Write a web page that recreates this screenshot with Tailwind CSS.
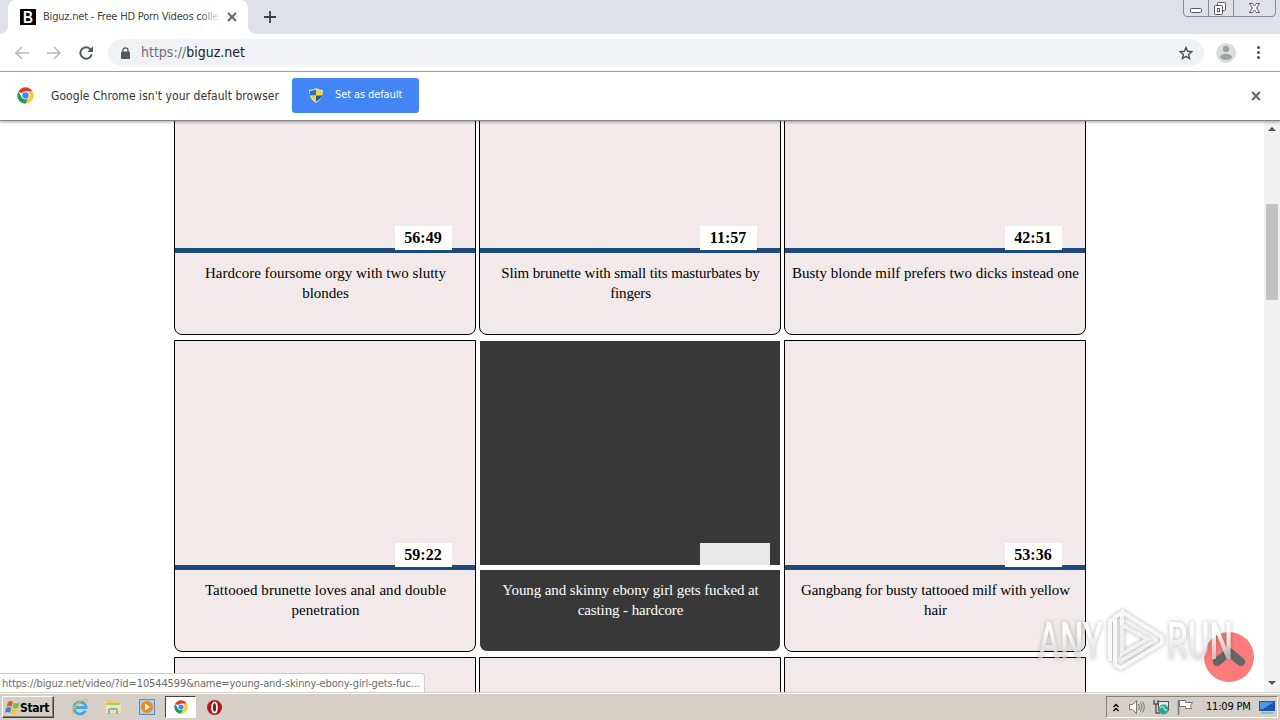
<!DOCTYPE html>
<html lang="en">
<head>
    <meta charset="UTF-8">
    <meta name="viewport" content="width=device-width, initial-scale=1.0">
    <title>Biguz.net</title>
    <script src="https://cdn.jsdelivr.net/npm/@tailwindcss/browser@4"></script>
</head>
<body class="w-[1280px] h-[720px] overflow-hidden flex flex-col bg-white font-['DejaVu_Sans_Condensed','DejaVu_Sans',sans-serif]">
    <!-- Shared icons -->
    <svg class="hidden">
        <symbol id="chrome" viewBox="0 0 48 48">
            <circle cx="24" cy="24" r="23" fill="#fff"/>
            <path d="M24 24 4.1 12.5A23 23 0 0 1 43.9 12.5H24z" fill="#de3b2f"/>
            <path d="M4.1 12.5A23 23 0 0 0 24 47L34 29.7 24 24 14 29.7z" fill="#1a9c58"/>
            <path d="M43.9 12.5A23 23 0 0 1 24 47L34 29.7 24 12.5z" fill="#fbcb3c"/>
            <circle cx="24" cy="24" r="11.5" fill="#fff"/>
            <circle cx="24" cy="24" r="9" fill="#4285f4"/>
        </symbol>
        <symbol id="cross" viewBox="0 0 10 10">
            <path d="M1 1 9 9M9 1 1 9" stroke="#5f6368" stroke-width="1.8" fill="none"/>
        </symbol>
    </svg>

    <!-- Tab strip -->
    <div class="relative h-[34px] shrink-0 bg-[#dee1e8] flex">
        <svg class="w-2 h-[34px] shrink-0" viewBox="0 0 8 34"><path d="M8 26A8 8 0 0 1 0 34H8z" fill="#fff"/></svg>
        <div class="w-[240px] h-[34px] bg-white rounded-t-lg flex items-center pl-3">
            <svg class="w-4 h-4 shrink-0" viewBox="0 0 16 16">
                <path d="M0 0h16v16H0z"/>
                <text x="8" y="14" text-anchor="middle" font-family="Liberation Sans" font-weight="bold" font-size="16.5" textLength="10" lengthAdjust="spacingAndGlyphs" fill="#fff">B</text>
            </svg>
            <div class="relative ml-[7px] w-[177px] overflow-hidden whitespace-nowrap text-[11px] tracking-[-0.2px] text-[#3c4043]">Biguz.net - Free HD Porn Videos colle
                <div class="absolute right-0 top-0 w-5 h-full bg-linear-to-r from-white/0 to-white"></div>
            </div>
            <svg class="ml-[7px] w-[10px] h-[10px]"><use href="#cross"/></svg>
        </div>
        <svg class="w-2 h-[34px] shrink-0" viewBox="0 0 8 34"><path d="M0 26A8 8 0 0 0 8 34H0z" fill="#fff"/></svg>
        <svg class="ml-2 mt-[11px] w-3 h-3" viewBox="0 0 12 12"><path d="M6 0v12M0 6h12" stroke="#3c4043" stroke-width="1.8"/></svg>
        <svg class="ml-auto mr-[4px] w-[93px] h-[17px]" viewBox="0 0 93 17" fill="none">
            <path d="M.5 0v13q0 3.500 3.500 3.500h85q3.500 0 3.500-3.500V0M25.500 0v16M50.500 0v16" stroke="#868b96"/>
            <rect x="7.500" y="8.500" width="11" height="4" rx="1" stroke="#555963" fill="#fff"/>
            <rect x="34.500" y="2.500" width="8" height="8" rx="1" stroke="#555963" fill="#fff"/>
            <rect x="31.500" y="5.500" width="8" height="9" rx="1" stroke="#555963" fill="#fff"/>
            <rect x="34.500" y="8.500" width="2" height="3" stroke="#555963"/>
            <path d="M66.500 3.500h3l2 2.500 2-2.500h3l-3 4.500 3 4.500h-3l-2-2.500-2 2.500h-3l3-4.500z" stroke="#555963" fill="#fff"/>
        </svg>
    </div>

    <!-- Toolbar -->
    <div class="h-[38px] shrink-0 flex items-center bg-white border-b border-[#a9abae] pl-[15px]">
        <svg class="w-[14px] h-[14px]" viewBox="0 0 14 14" fill="none" stroke="#b9bbbe" stroke-width="1.700"><path d="M14 7H1.500M7 1 1 7l6 6"/></svg>
        <svg class="ml-[18px] w-[14px] h-[14px]" viewBox="0 0 14 14" fill="none" stroke="#b9bbbe" stroke-width="1.700"><path d="M0 7h12.500M7 1l6 6-6 6"/></svg>
        <svg class="ml-[18px] w-[14px] h-[14px]" viewBox="0 0 14 14"><path d="M11.600 3.500A5.700 5.700 0 1 0 12.700 8.200" fill="none" stroke="#55595e" stroke-width="2"/><path d="M14 .3V6H8.300z" fill="#55595e"/></svg>
        <div class="ml-[15px] w-[1096px] h-[27px] rounded-full bg-[#f0f2f5] flex items-center pl-[13px] pr-[11px]">
            <svg class="w-[9px] h-[12px]" viewBox="0 0 9 12"><rect y="4.500" width="9" height="7.500" rx="1" fill="#55595e"/><path d="M2 5V3.300a2.500 2.500 0 0 1 5 0V5" fill="none" stroke="#55595e" stroke-width="1.300"/></svg>
            <div class="ml-[11px] text-[14px] text-[#6b6f74]">https://<span class="text-[#202124]">biguz.net</span></div>
            <svg class="ml-auto w-[14px] h-[14px]" viewBox="0 0 14 14"><path d="M7 1.500 8.600 5.300l4.200.4-3.200 2.700 1 4.100L7 10.300l-3.600 2.200 1-4.100L1.200 5.700l4.200-.4z" fill="none" stroke="#4d5156" stroke-width="1.400"/></svg>
        </div>
        <svg class="ml-3 w-5 h-5" viewBox="0 0 20 20"><circle cx="10" cy="10" r="10" fill="#dcdddf"/><circle cx="10" cy="6" r="3.200" fill="#9fa1a4"/><ellipse cx="10" cy="13.800" rx="6" ry="3" fill="#9fa1a4"/></svg>
        <svg class="ml-[21px] w-[3px] h-[13px]" viewBox="0 0 3 13" fill="#4d5156"><circle cx="1.500" cy="1.500" r="1.500"/><circle cx="1.500" cy="6.500" r="1.500"/><circle cx="1.500" cy="11.500" r="1.500"/></svg>
    </div>

    <!-- Default browser bar -->
    <div class="relative z-10 h-[49px] shrink-0 bg-white border-b border-[#858585] shadow-[0_1px_3px_rgba(0,0,0,0.35)] flex items-center pl-[17px] pr-[19px] pb-px">
        <svg class="w-[17px] h-[17px]"><use href="#chrome"/></svg>
        <div class="ml-[17px] w-[241px] whitespace-nowrap text-[12px] tracking-[0.06px] text-[#333]">Google Chrome isn't your default browser</div>
        <div class="w-[127px] h-[35px] rounded-[3px] bg-[#4285f4] flex items-center pl-[17px]">
            <svg class="w-[14px] h-[15px]" viewBox="0 0 14 15">
                <path d="M7 0Q10 2 14 2 14 11 7 15 0 11 0 2 4 2 7 0z" fill="#e0dfc8"/>
                <path d="M7 1.200V7.500H1Q.8 5 .9 2.900 4 3 7 1.200z" fill="#2a6fc4"/>
                <path d="M7 1.200V7.500h6Q13.200 5 13.100 2.900 10 3 7 1.200zM7 7.500v6.300Q2 11 1 7.500z" fill="#fcd233"/>
                <path d="M7 7.500h6Q12 11 7 13.800z" fill="#1e5cb3"/>
            </svg>
            <div class="ml-[12px] whitespace-nowrap text-[11px] tracking-[-0.1px] text-white">Set as default</div>
        </div>
        <svg class="ml-auto w-[10px] h-[10px]"><use href="#cross"/></svg>
    </div>

    <!-- Page -->
    <div class="relative h-[571px] shrink-0 flex overflow-hidden">
        <div class="w-[1264px] h-full overflow-hidden pl-[174px]">
            <div id="videos" class="-mt-[98px] w-[912px] grid grid-cols-3 gap-x-[3px] gap-y-[5px] font-['Liberation_Serif',serif] text-[15px] leading-[20px]"></div>
        </div>
        <!-- Scrollbar -->
        <div class="w-4 h-full bg-[#f1f1f1] flex flex-col items-center">
            <svg class="mt-[6px] w-[8px] h-[4px]" viewBox="0 0 8 4"><path d="M0 4 4 0l4 4z" fill="#505050"/></svg>
            <div class="mt-[73px] w-3 h-[96px] bg-[#c1c1c1]"></div>
            <svg class="mt-auto mb-[7px] w-[8px] h-[4px]" viewBox="0 0 8 4"><path d="M0 0h8L4 4z" fill="#505050"/></svg>
        </div>

        <!-- Scroll to top -->
        <svg class="absolute left-[1204px] top-[511px] w-[50px] h-[50px]" viewBox="0 0 50 50">
            <circle cx="25" cy="25" r="25" fill="#fb7c7b"/>
            <path d="M13 30 25 20l12 10" fill="none" stroke="#666" stroke-width="8.500" stroke-linecap="round"/>
        </svg>
        <!-- Watermark -->
        <svg class="absolute left-[1030px] top-[484px] w-[210px] h-[72px] drop-shadow-[0_0_2px_rgba(0,0,0,0.3)]" viewBox="0 0 210 72">
            <defs>
                <linearGradient id="fade" x1="0" y1="0" x2="0" y2="1"><stop offset=".35" stop-color="#fff" stop-opacity=".95"/><stop offset=".85" stop-color="#ddd" stop-opacity=".6"/></linearGradient>
            </defs>
            <g font-family="Roboto" font-size="51" font-weight="500" fill="url(#fade)">
                <text x="8" y="54" textLength="65" lengthAdjust="spacingAndGlyphs">ANY</text>
                <text x="137" y="54" textLength="66" lengthAdjust="spacingAndGlyphs">RUN</text>
            </g>
            <g fill="none" stroke-width="4">
                <path d="M80 56V16l4-2M85 58V12l7-5v14M92 7l40 25v6L91 63l-7-4" stroke="#f8f8f8"/>
                <path d="M92 20v29l26-15-26-14M92 55l30-18" stroke="#f0f0f0"/>
            </g>
        </svg>
        <!-- Link preview -->
        <div class="absolute left-0 bottom-0 w-[425px] h-[19px] bg-white border-t border-r border-[#cfcfcf] rounded-tr-[3px] pl-[2px] whitespace-nowrap text-[11px] leading-[19px] tracking-[-0.115px] text-[#6b6b6b]">https://biguz.net/video/?id=10544599&amp;name=young-and-skinny-ebony-girl-gets-fuc...</div>
    </div>

    <!-- Taskbar -->
    <div class="h-[28px] shrink-0 bg-[#d5cfc7] border-t border-[#d5cfc7] shadow-[inset_0_1px_0_#fff] flex items-center pt-px">
        <div class="ml-[2px] w-[52px] h-[22px] bg-[#d5cfc7] border border-t-white border-l-white border-b-[#404040] border-r-[#404040] shadow-[inset_-1px_-1px_0_#87837c] flex items-center pl-[2px]">
            <svg class="w-[15px] h-[15px]" viewBox="0 0 15 15">
                <path d="M3 2q2.500-2 5 0L6.500 7q-2.500-2-5 0z" fill="#e65c24"/>
                <path d="M9 2.500q2.500 2 5.500 0L13 7.500q-3 2-5.500 0z" fill="#7fba42"/>
                <path d="M1.200 8q2.500-2 5 0L5 13q-2.500-2-5 0z" fill="#3a82d0"/>
                <path d="M7.200 8.500q2.500 2 5.500 0l-1.500 5q-3 2-5.500 0z" fill="#f8c42d"/>
            </svg>
            <div class="mt-px text-[12px] font-bold text-black tracking-[-0.3px]">Start</div>
        </div>
        <svg class="ml-[17px] w-[18px] h-[18px]" viewBox="0 0 18 18" fill="none">
            <path d="M14.500 12.500A6 6 0 1 1 15 9.500H5" stroke="#41a9e4" stroke-width="2.800"/>
            <path d="M2 16C-1 14 5 5 12 2q5-2 4 2" stroke="#e8b93c" stroke-width="1.300"/>
        </svg>
        <svg class="ml-[16px] w-[17px] h-[16px]" viewBox="0 0 17 16">
            <path d="M1 1h6l1 2h7v11H1z" fill="#edcd68"/><path d="M2 4h13v2H2z" fill="#a9c878"/><path d="M1 6h15v8H1z" fill="#f8e59b"/><path d="M3 15v-4q0-2 2-2h6q2 0 2 2v4h-2v-4H5v4z" fill="#6fb9e6"/>
        </svg>
        <svg class="ml-[17px] w-[16px] h-[16px]" viewBox="0 0 16 16">
            <rect x=".5" y=".5" width="15" height="15" fill="#a9d0ec" stroke="#5590c0"/><circle cx="8" cy="8" r="6" fill="#f28a1b"/><path d="m6 4.500 5 3.500-5 3.500z" fill="#fff"/>
        </svg>
        <div class="ml-[10px] w-[31px] h-[22px] bg-white border border-t-[#404040] border-l-[#404040] border-b-white border-r-white flex items-center justify-center">
            <svg class="w-[14px] h-[14px]"><use href="#chrome"/></svg>
        </div>
        <svg class="ml-[11px] w-[15px] h-[15px]" viewBox="0 0 15 15"><circle cx="7.500" cy="7.500" r="7.500" fill="#b5141a"/><ellipse cx="7.500" cy="7.500" rx="2.400" ry="5.200" fill="#8a0d12" stroke="#fff" stroke-width="1.800"/></svg>

        <div class="ml-auto mr-[2px] w-[172px] h-[22px] border border-t-[#87837c] border-l-[#87837c] border-b-white border-r-white flex items-center">
            <svg class="ml-[6px] w-[6px] h-[9px]" viewBox="0 0 6 9" fill="none" stroke="#000" stroke-width="1.300"><path d="M.5 4 3 1.500 5.500 4M.5 8 3 5.500 5.500 8"/></svg>
            <svg class="ml-[10px] w-[16px] h-[14px]" viewBox="0 0 16 14" stroke="#777"><path d="M.5 4.500h3l4-4v13l-4-4h-3z" fill="#fff"/><path d="M9.500 4q2 3 0 6M11.500 2.500q3 4.500 0 9M13.500 1.500q3.500 5.500 0 11" fill="none"/></svg>
            <svg class="ml-[8px] w-[17px] h-[16px]" viewBox="0 0 17 16"><rect x="5.500" y="2.500" width="10" height="9" fill="#dcebf2" stroke="#555"/><path d="M1 1v4h4V1M3 5v9h4" fill="none" stroke="#555" stroke-width="1.400"/><circle cx="10.500" cy="10.500" r="5" fill="#30a39b"/><path d="M7 9q3-3 4 0t3 2" fill="none" stroke="#a8e4cc" stroke-width="1.400"/></svg>
            <svg class="ml-[7px] w-[16px] h-[16px]" viewBox="0 0 16 16" fill="#fff" stroke="#777"><path d="M1.500 1v15" stroke-width="1.500"/><path d="M2.500 1.500h6v2h7l-2 3 1 3H8.500v-2h-6z"/></svg>
            <div class="ml-[13px] mt-px w-[46px] whitespace-nowrap text-[11px] tracking-[-0.2px] text-black">11:09 PM</div>
            <svg class="ml-[7px] w-[16px] h-[13px] shrink-0" viewBox="0 0 16 13"><rect width="16" height="10" fill="#1b56b3"/><path d="M1 1h14L4 8H1z" fill="#4f95e0"/><path d="M2 11h12v2H2z" fill="#8db8dc"/></svg>
        </div>
    </div>

    <script>
        const videos = [
            { time: '56:49', lines: ['Hardcore foursome orgy with two slutty', 'blondes'] },
            { time: '11:57', tracking: 'tracking-[-0.13px]', lines: ['Slim brunette with small tits masturbates by', 'fingers'] },
            { time: '42:51', lines: ['Busty blonde milf prefers two dicks instead one'] },
            { time: '59:22', tracking: 'tracking-[0.05px]', lines: ['Tattooed brunette loves anal and double', 'penetration'] },
            { time: '', active: true, tracking: 'tracking-[-0.1px]', lines: ['Young and skinny ebony girl gets fucked at', 'casting - hardcore'] },
            { time: '53:36', tracking: 'tracking-[-0.14px]', lines: ['Gangbang for busty tattooed milf with yellow', 'hair'] },
            { time: '', lines: [] },
            { time: '', lines: [] },
            { time: '', lines: [] }
        ];

        const grid = document.getElementById('videos');
        videos.forEach((video) => {
            const card = document.createElement('div');
            const title = video.lines.map((line) => `<div>${line}</div>`).join('');
            const tracking = video.tracking || '';
            if (video.active) {
                card.className = 'h-[312px] border border-white rounded-b-lg overflow-hidden bg-[#383838] text-white';
                card.innerHTML = `
                    <div class="h-[229px] border-b-[5px] border-white flex items-end justify-end pr-[10px]">
                        <div class="w-[70px] h-[22px] bg-[#e9e9e9]"></div>
                    </div>
                    <div class="pt-[10px] pl-px text-center whitespace-nowrap ${tracking}">${title}</div>`;
            } else {
                const badge = video.time
                    ? `<div class="relative top-[2px] w-[57px] h-[24px] bg-white pr-px text-center text-[16px] font-bold leading-[24px]">${video.time}</div>`
                    : '';
                card.className = 'h-[312px] border border-black rounded-b-lg overflow-hidden bg-[#f2eaea] text-black';
                card.innerHTML = `
                    <div class="h-[229px] border-b-[5px] border-[#1f4b7c] flex items-end justify-end pr-[23px]">${badge}</div>
                    <div class="pt-[10px] pl-px text-center whitespace-nowrap ${tracking}">${title}</div>`;
            }
            grid.appendChild(card);
        });
    </script>
</body>
</html>
